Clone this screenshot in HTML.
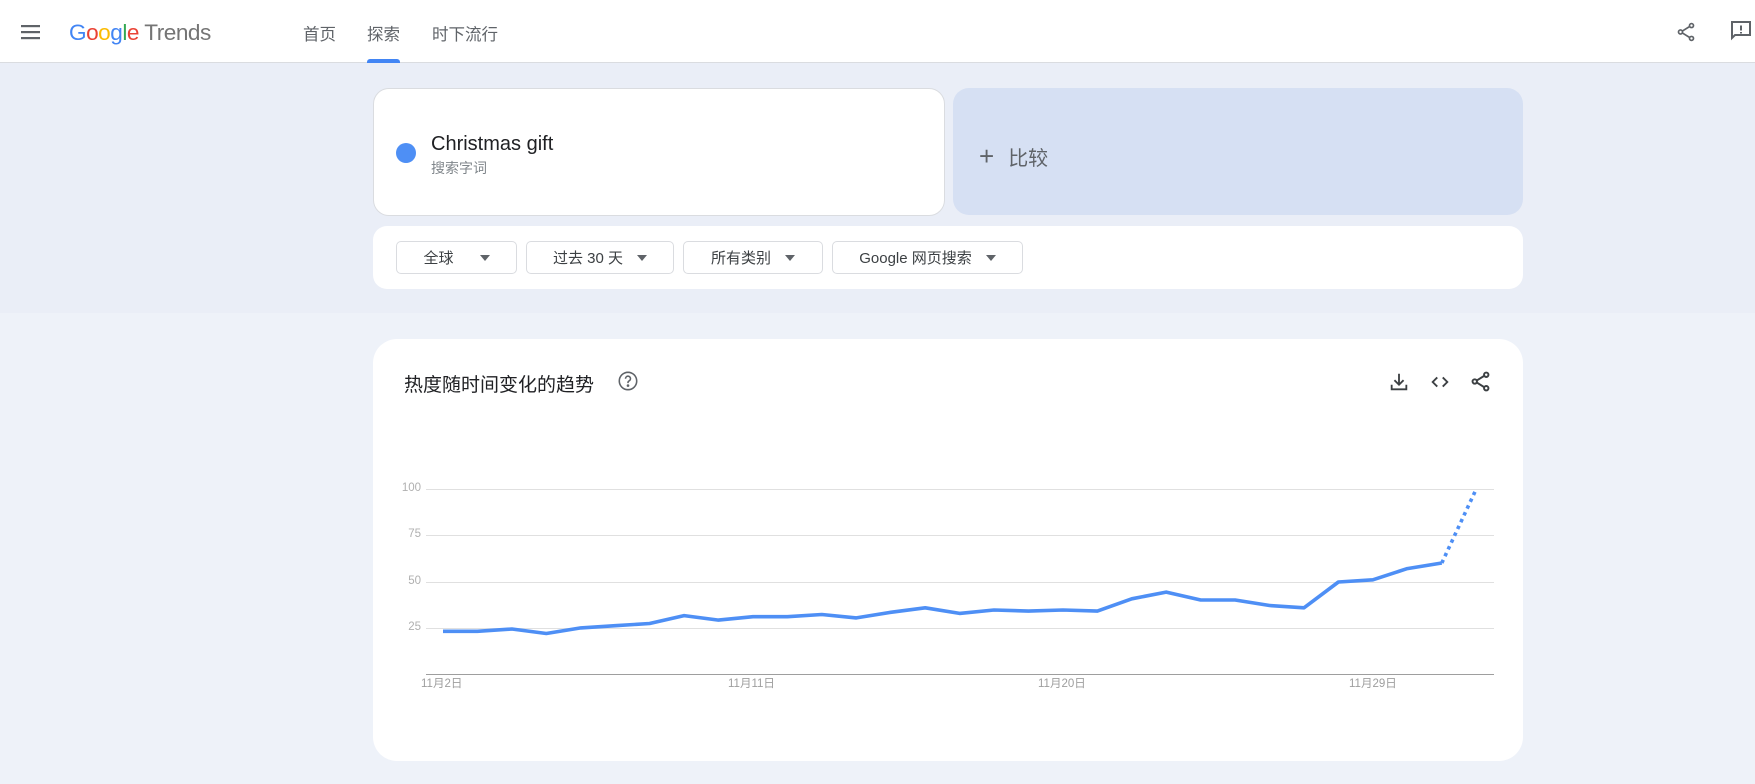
<!DOCTYPE html>
<html><head><meta charset="utf-8"><style>
*{margin:0;padding:0;box-sizing:border-box}
body{width:1755px;height:784px;overflow:hidden;background:#eef2f9;font-family:"Liberation Sans","Noto Sans CJK SC",sans-serif;position:relative}
.abs{position:absolute}
header{position:absolute;left:0;top:0;width:1755px;height:63px;background:#fff;border-bottom:1px solid #dadce0}
.band{position:absolute;left:0;top:63px;width:1755px;height:250px;background:#eaeef7}
.nav{position:absolute;top:21px;font-size:16.5px;color:#5f6368}
.card{position:absolute;background:#fff}
.btn{position:absolute;top:241px;height:33px;border:1px solid #dadce0;border-radius:5px;font-size:15px;color:#3c4043;display:flex;align-items:center;justify-content:center;gap:14px}
.tri{width:0;height:0;border-left:5px solid transparent;border-right:5px solid transparent;border-top:6px solid #5f6368}
.yl{position:absolute;font-size:11.5px;color:#b0b0b0;text-align:right;width:40px;left:381px}
.xl{position:absolute;font-size:11.5px;color:#9e9e9e;top:675px}
</style></head><body>
<header>
<svg class="abs" style="left:21px;top:24px" width="20" height="16"><rect y="1" width="19" height="2.2" fill="#5f6368"/><rect y="7" width="19" height="2.2" fill="#5f6368"/><rect y="13" width="19" height="2.2" fill="#5f6368"/></svg>
<div class="abs" style="left:69px;top:20px;font-size:22.6px;letter-spacing:-0.5px"><span style="color:#4285f4">G</span><span style="color:#ea4335">o</span><span style="color:#fbbc05">o</span><span style="color:#4285f4">g</span><span style="color:#34a853">l</span><span style="color:#ea4335">e</span><span style="color:#757575"> Trends</span></div>
<div class="nav" style="left:303px">首页</div>
<div class="nav" style="left:367px">探索</div>
<div class="nav" style="left:432px">时下流行</div>
<div class="abs" style="left:367px;top:59px;width:33px;height:4px;background:#4285f4;border-radius:3px 3px 0 0"></div>
<svg class="abs" style="left:1675px;top:21px" width="22" height="22" viewBox="0 0 24 24" fill="none" stroke="#5f6368" stroke-width="1.8"><circle cx="18" cy="5" r="2.2"/><circle cx="6" cy="12" r="2.2"/><circle cx="18" cy="19" r="2.2"/><path d="M8 11l8-5M8 13l8 5"/></svg>
<svg class="abs" style="left:1729px;top:19px" width="24" height="24" viewBox="0 0 24 24" fill="none" stroke="#5f6368" stroke-width="2"><path d="M3 3h18v13H6l-3 3z"/><path d="M12 6.5v5M12 13v1.5"/></svg>
</header>
<div class="band"></div>
<div class="card" style="left:373px;top:88px;width:572px;height:128px;border-radius:16px;border:1px solid #dadce0"></div>
<div class="abs" style="left:396px;top:143px;width:20px;height:20px;border-radius:50%;background:#4e8ff5"></div>
<div class="abs" style="left:431px;top:133px;font-size:20px;color:#202124">Christmas gift</div>
<div class="abs" style="left:431px;top:158px;font-size:14px;color:#80868b">搜索字词</div>
<div class="card" style="left:953px;top:88px;width:570px;height:127px;border-radius:16px;background:#d6e0f3"></div>
<div class="abs" style="left:979px;top:141px;height:30px;display:flex;align-items:center;gap:14px;color:#5f6368"><span style="font-size:26px;font-weight:300;line-height:30px">+</span><span style="font-size:20px">比较</span></div>
<div class="card" style="left:373px;top:226px;width:1150px;height:63px;border-radius:14px"></div>
<div class="btn" style="left:396px;width:121px">全球<span class="tri" style="margin-left:12px"></span></div>
<div class="btn" style="left:526px;width:148px">过去 30 天<span class="tri"></span></div>
<div class="btn" style="left:683px;width:140px">所有类别<span class="tri"></span></div>
<div class="btn" style="left:832px;width:191px">Google 网页搜索<span class="tri"></span></div>
<div class="card" style="left:373px;top:339px;width:1150px;height:422px;border-radius:24px"></div>
<div class="abs" style="left:404px;top:370px;font-size:19px;color:#202124">热度随时间变化的趋势</div>
<svg class="abs" style="left:617px;top:370px" width="22" height="22" viewBox="0 0 24 24" fill="none" stroke="#5f6368" stroke-width="1.7"><circle cx="12" cy="12" r="9.5"/><path d="M9.3 9.5a2.7 2.7 0 1 1 3.8 2.4c-.8.4-1.1 1-1.1 1.8v.6"/><circle cx="12" cy="17" r=".6" fill="#5f6368"/></svg>
<svg class="abs" style="left:1388px;top:371px" width="22" height="22" viewBox="0 0 24 24" fill="none" stroke="#3c4043" stroke-width="2"><path d="M12 3v11M7 10l5 5 5-5M4 15v5h16v-5"/></svg>
<svg class="abs" style="left:1429px;top:371px" width="22" height="22" viewBox="0 0 24 24" fill="none" stroke="#3c4043" stroke-width="2"><path d="M9 7l-5 5 5 5M15 7l5 5-5 5"/></svg>
<svg class="abs" style="left:1469px;top:370px" width="23" height="23" viewBox="0 0 24 24" fill="none" stroke="#3c4043" stroke-width="2"><circle cx="18" cy="5" r="2.3"/><circle cx="6" cy="12" r="2.3"/><circle cx="18" cy="19" r="2.3"/><path d="M8 11l8-5M8 13l8 5"/></svg>
<svg class="abs" style="left:0;top:0" width="1755" height="784">
<g stroke="#e0e0e0" stroke-width="1"><line x1="426" y1="489.5" x2="1494" y2="489.5"/><line x1="426" y1="535.5" x2="1494" y2="535.5"/><line x1="426" y1="582.5" x2="1494" y2="582.5"/><line x1="426" y1="628.5" x2="1494" y2="628.5"/></g>
<line x1="426" y1="674.5" x2="1494" y2="674.5" stroke="#9e9e9e" stroke-width="1"/>
<polyline fill="none" stroke="#4e8ff5" stroke-width="3.6" stroke-linejoin="round" points="443,631.3 477.4,631.3 511.9,629 546.3,633.5 580.8,627.9 615.2,625.7 649.6,623.5 684.1,615.6 718.5,620.1 753,616.7 787.4,616.7 821.8,614.5 856.3,617.9 890.7,612.3 925.2,607.8 959.6,613.4 994,610 1028.5,611.1 1062.9,610 1097.4,611.1 1131.8,598.8 1166.2,592.1 1200.7,600 1235.1,600 1269.6,605.5 1304,607.8 1338.4,582 1372.9,579.8 1407.3,568.6 1441.8,563"/>
<line x1="1441.8" y1="563" x2="1476.2" y2="489.1" stroke="#4e8ff5" stroke-width="3.6" stroke-dasharray="3.5 4"/>
</svg>
<div class="yl" style="top:482px">100</div>
<div class="yl" style="top:528px">75</div>
<div class="yl" style="top:575px">50</div>
<div class="yl" style="top:621px">25</div>
<div class="xl" style="left:421px">11月2日</div>
<div class="xl" style="left:728px">11月11日</div>
<div class="xl" style="left:1038px">11月20日</div>
<div class="xl" style="left:1349px">11月29日</div>
</body></html>
